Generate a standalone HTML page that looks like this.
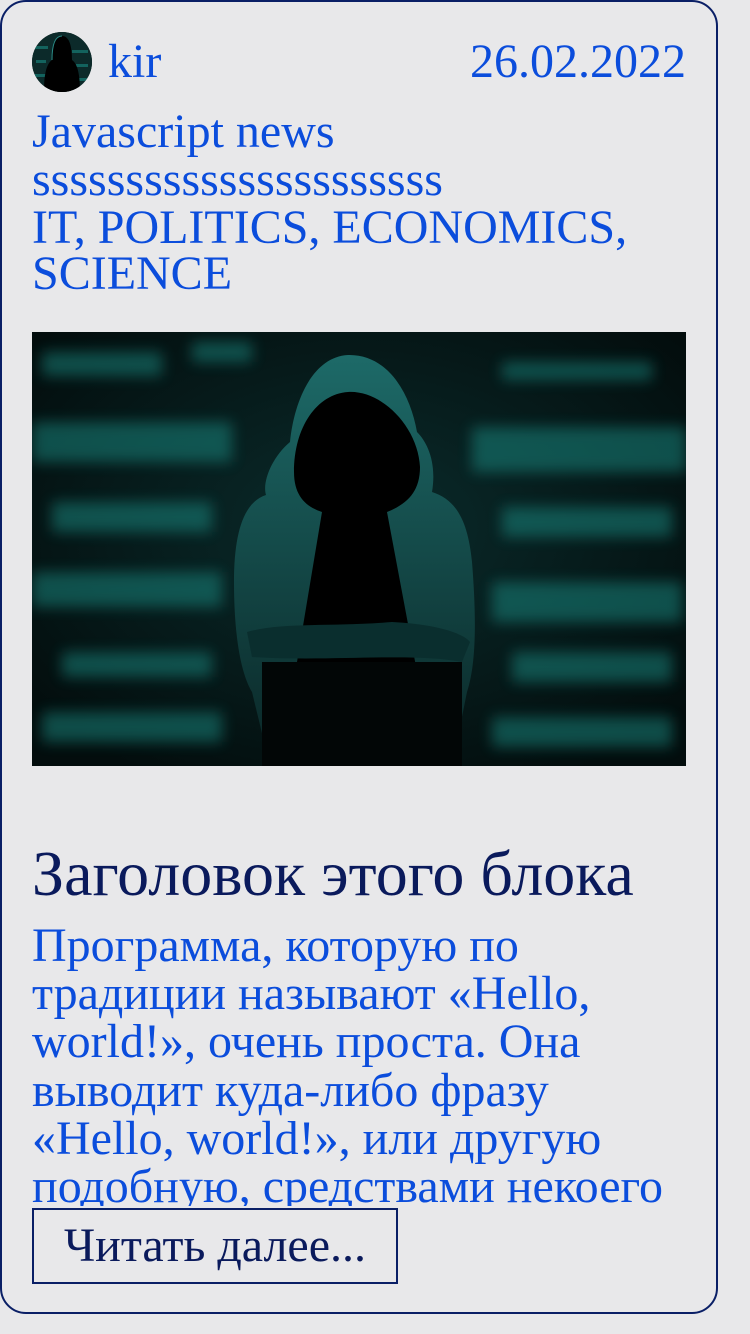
<!DOCTYPE html>
<html><head><meta charset="utf-8"><style>
html,body{margin:0;padding:0;background:#e8e8ea;width:750px;height:1334px;overflow:hidden;font-family:"Liberation Serif",serif}
.card{position:absolute;left:0;top:0;width:714px;height:1310px;border:2px solid #0a1f66;border-radius:26px;background:#e8e8ea}
.t{position:absolute;color:#0b4ddc;font-size:48px;line-height:47px;white-space:nowrap}
.av{position:absolute;left:32px;top:32px;width:60px;height:60px;border-radius:50%;overflow:hidden;background:#0a1a1a}
.img{position:absolute;left:32px;top:332px;width:654px;height:434px}
.h{position:absolute;left:32px;top:838px;font-size:64px;color:#0a1a5c;line-height:72px;white-space:nowrap}
.p{position:absolute;left:32px;top:922px;width:654px;height:284px;overflow:hidden;font-size:48px;line-height:48.2px;color:#0b4ddc}
.btn{position:absolute;left:32px;top:1208px;width:362px;height:72px;border:2px solid #0a1f66;color:#0a1a5c;font-size:48px;line-height:72px;text-align:center}
</style></head><body>
<div class="card"></div>
<div class="av"><svg width="60" height="60" viewBox="0 0 60 60"><rect width="60" height="60" fill="#0c2a2a"/><g fill="#1a8a82" opacity=".6"><rect x="2" y="14" width="14" height="3"/><rect x="40" y="18" width="16" height="3"/><rect x="4" y="28" width="10" height="3"/><rect x="44" y="32" width="12" height="3"/><rect x="2" y="42" width="14" height="3"/><rect x="42" y="46" width="14" height="3"/></g><path d="M30 4 C22 4 20 16 20 28 C14 32 12 44 12 60 L48 60 C48 44 46 32 40 28 C40 16 38 4 30 4Z" fill="#000"/><path d="M30 4 C22 4 20 16 20 28" stroke="#2a8a86" fill="none"/></svg></div>
<div class="t" style="left:108px;top:38px">kir</div>
<div class="t" style="right:64px;top:38px">26.02.2022</div>
<div class="t" style="left:32px;top:108px">Javascript news</div>
<div class="t" style="left:32px;top:156px">ssssssssssssssssssssss</div>
<div class="t" style="left:32px;top:204px">IT, POLITICS, ECONOMICS,</div>
<div class="t" style="left:32px;top:250px">SCIENCE</div>
<svg class="img" viewBox="0 0 654 434">
<defs><filter id="b"><feGaussianBlur stdDeviation="7"/></filter>
<radialGradient id="g" cx="50%" cy="45%" r="65%"><stop offset="0" stop-color="#0a2c2c"/><stop offset="1" stop-color="#030d0d"/></radialGradient>
<linearGradient id="f" x1="0" y1="0" x2="0" y2="1"><stop offset="0" stop-color="#1d6a68"/><stop offset="1" stop-color="#0a2626"/></linearGradient></defs>
<rect width="654" height="434" fill="url(#g)"/>
<g filter="url(#b)" fill="#1a9a90" opacity=".45">
<rect x="10" y="20" width="120" height="24"/><rect x="160" y="10" width="60" height="20"/><rect x="470" y="30" width="150" height="18"/>
<rect x="0" y="90" width="200" height="40"/><rect x="440" y="95" width="214" height="45"/>
<rect x="20" y="170" width="160" height="30"/><rect x="470" y="175" width="170" height="30"/>
<rect x="0" y="240" width="190" height="35"/><rect x="460" y="250" width="190" height="40"/>
<rect x="30" y="320" width="150" height="25"/><rect x="480" y="320" width="160" height="30"/>
<rect x="10" y="380" width="180" height="30"/><rect x="460" y="385" width="180" height="30"/>
</g>
<path d="M316 23 C280 25 262 70 258 110 C240 125 230 150 234 163 C212 170 202 200 202 250 C202 300 208 340 220 360 L238 434 L420 434 L435 360 C445 330 444 280 440 230 C436 190 425 168 400 160 C405 130 395 110 385 100 C378 60 355 22 316 23Z" fill="url(#f)"/>
<path d="M316 60 C285 62 262 95 262 140 C262 165 275 175 290 180 L250 420 L400 420 L355 180 C375 172 388 160 388 135 C386 95 350 58 316 60Z" fill="#000"/>
<path d="M215 300 C250 290 300 295 360 290 C400 292 430 300 438 310 L430 330 C380 320 300 330 220 325Z" fill="#0a2e2e"/>
<rect x="230" y="330" width="200" height="104" fill="#020606"/>
</svg>
<div class="h">Заголовок этого блока</div>
<div class="p">Программа, которую по традиции называют «Hello, world!», очень проста. Она выводит куда-либо фразу «Hello, world!», или другую подобную, средствами некоего языка</div>
<div class="btn">Читать далее...</div>
</body></html>
